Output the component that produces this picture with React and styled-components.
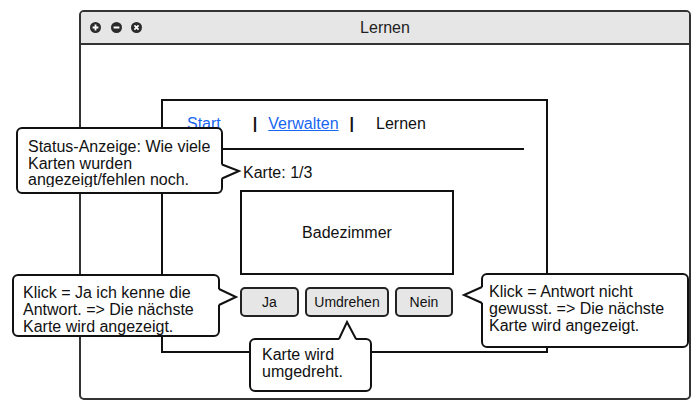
import styled, { createGlobalStyle } from "styled-components";

const GlobalStyle = createGlobalStyle`
  body {
    margin: 0;
    background: #ffffff;
    font-family: "Liberation Sans", Arial, sans-serif;
    color: #111;
  }
`;

const callouts = [
  {
    id: "status",
    box: { left: 16, top: 127, width: 207, height: 67 },
    pad: "10px 8px 0 10px",
    clip: 48,
    lh: 16.5,
    tail: { side: "right", at: 44.5, half: 7, tipAt: 44, depth: 16 },
    lines: ["Status-Anzeige: Wie viele", "Karten wurden", "angezeigt/fehlen noch."],
  },
  {
    id: "ja",
    box: { left: 12, top: 274, width: 208, height: 63 },
    pad: "8px 8px 0 9px",
    tail: { side: "right", at: 23, half: 8, tipAt: 23, depth: 16 },
    lines: ["Klick = Ja ich kenne die", "Antwort. => Die nächste", "Karte wird angezeigt."],
  },
  {
    id: "nein",
    box: { left: 481, top: 273, width: 208, height: 75 },
    pad: "8px 6px 0 6px",
    tail: { side: "left", at: 22, half: 8, tipAt: 22, depth: 17 },
    lines: ["Klick = Antwort nicht", "gewusst. => Die nächste", "Karte wird angezeigt."],
  },
  {
    id: "umdrehen",
    box: { left: 249, top: 338, width: 123, height: 54 },
    pad: "6px 6px 0 11px",
    tail: { side: "top", at: 98.5, half: 8.5, tipAt: 98, depth: 16 },
    lines: ["Karte wird", "umgedreht."],
  },
];

function tailPoints({ side, at, half, tipAt, depth }, w, h) {
  const horiz = side === "left" || side === "right";
  const out = side === "right" || side === "bottom" ? 1 : -1;
  const size = horiz ? w : h;
  const inner = out > 0 ? size - 4 : 0;
  const mid = inner + out;
  const tipN = inner + 2 * out + out * depth;
  const a1 = at - 2 - half;
  const a2 = at - 2 + half;
  const ta = tipAt - 2;
  const pt = (n, a) => (horiz ? `${n},${a}` : `${a},${n}`);
  return {
    fill: [pt(inner - out, a1 - 0.5), pt(tipN, ta), pt(inner - out, a2 + 0.5)].join(" "),
    line: [pt(mid, a1), pt(tipN, ta), pt(mid, a2)].join(" "),
  };
}

const WindowIcon = ({ kind }) => (
  <svg width="11" height="11" viewBox="0 0 11 11">
    <circle cx="5.5" cy="5.5" r="5.5" fill="#2b2b2b" />
    {kind === "plus" && <path d="M5.5 2.6v5.8M2.6 5.5h5.8" stroke="#fff" strokeWidth="1.8" />}
    {kind === "minus" && <path d="M2.6 5.5h5.8" stroke="#fff" strokeWidth="1.8" />}
    {kind === "close" && <path d="M3.4 3.4l4.2 4.2M7.6 3.4l-4.2 4.2" stroke="#fff" strokeWidth="1.7" />}
  </svg>
);

const App = () => {
  return (
    <Page>
      <GlobalStyle />
      <Window>
        <TitleBar>
          <Controls>
            <WindowIcon kind="plus" />
            <WindowIcon kind="minus" />
            <WindowIcon kind="close" />
          </Controls>
          <Title>Lernen</Title>
        </TitleBar>
        <Content>
          <Panel>
            <Nav>
              <NavLink href="#">Start</NavLink>
              <Sep $gap={32}>|</Sep>
              <NavLink href="#" $gap={11}>Verwalten</NavLink>
              <Sep $gap={11}>|</Sep>
              <NavText $gap={22}>Lernen</NavText>
            </Nav>
            <Divider />
            <Counter>Karte: 1/3</Counter>
            <Card>Badezimmer</Card>
            <ButtonRow>
              <Button $w={59}>Ja</Button>
              <Button $w={84}>Umdrehen</Button>
              <Button $w={58}>Nein</Button>
            </ButtonRow>
          </Panel>
        </Content>
      </Window>

      {callouts.map((c) => {
        const t = tailPoints(c.tail, c.box.width, c.box.height);
        return (
          <Callout key={c.id} $box={c.box} $pad={c.pad}>
            <CalloutText $clip={c.clip} $lh={c.lh}>
              {c.lines.map((l) => (
                <div key={l}>{l}</div>
              ))}
            </CalloutText>
            <Tail width="1" height="1">
              <polygon points={t.fill} fill="#fff" />
              <polyline points={t.line} fill="none" stroke="#111" strokeWidth="2" strokeLinejoin="miter" />
            </Tail>
          </Callout>
        );
      })}
    </Page>
  );
};

export default App;

const Page = styled.div`
  position: relative;
  width: 700px;
  height: 416px;
  padding: 10px 0 0 79px;
  box-sizing: border-box;
  overflow: hidden;
`;

const Window = styled.div`
  width: 612px;
  height: 390px;
  border: 2px solid #333;
  border-radius: 5px;
  box-sizing: border-box;
  overflow: hidden;
  display: flex;
  flex-direction: column;
  background: #fff;
`;

const TitleBar = styled.div`
  height: 31px;
  border-bottom: 2px solid #333;
  background: #e6e6e6;
  display: grid;
  grid-template-columns: 1fr auto 1fr;
  align-items: center;
`;

const Controls = styled.div`
  display: flex;
  align-items: center;
  gap: 9.5px;
  padding-left: 9px;
  margin-top: -1px;

  svg {
    display: block;
  }
`;

const Title = styled.div`
  font-size: 16px;
  color: #222;
`;

const Content = styled.div`
  flex: 1;
  padding: 54px 0 0 80px;
`;

const Panel = styled.div`
  width: 387px;
  height: 254px;
  border: 2px solid #111;
  box-sizing: border-box;
  padding: 14px 0 0 24px;
  display: flex;
  flex-direction: column;
  align-items: flex-start;
`;

const Nav = styled.div`
  display: flex;
  align-items: center;
  height: 18px;
  font-size: 16px;
`;

const NavLink = styled.a`
  color: #1866f2;
  text-decoration: underline;
  margin-left: ${(p) => p.$gap || 0}px;
`;

const NavText = styled.span`
  color: #111;
  margin-left: ${(p) => p.$gap || 0}px;
`;

const Sep = styled.span`
  font-weight: bold;
  color: #111;
  margin-left: ${(p) => p.$gap || 0}px;
`;

const Divider = styled.div`
  width: 339px;
  height: 2px;
  background: #111;
  margin: 15px 0 0 -2px;
`;

const Counter = styled.div`
  font-size: 16px;
  line-height: 18px;
  margin: 14px 0 0 56px;
`;

const Card = styled.div`
  width: 214px;
  height: 85px;
  border: 2px solid #111;
  box-sizing: border-box;
  margin: 8px 0 0 53px;
  display: flex;
  align-items: center;
  justify-content: center;
  font-size: 16px;
`;

const ButtonRow = styled.div`
  display: flex;
  gap: 6px;
  margin: 12px 0 0 53px;
`;

const Button = styled.button`
  width: ${(p) => p.$w}px;
  height: 30px;
  border: 2px solid #222;
  border-radius: 5px;
  background: #e6e6e6;
  font-family: "Liberation Sans", Arial, sans-serif;
  font-size: 14px;
  color: #111;
  padding: 0;
`;

const Callout = styled.div`
  position: absolute;
  left: ${(p) => p.$box.left}px;
  top: ${(p) => p.$box.top}px;
  width: ${(p) => p.$box.width}px;
  height: ${(p) => p.$box.height}px;
  box-sizing: border-box;
  border: 2px solid #111;
  border-radius: 6px;
  background: #fff;
  padding: ${(p) => p.$pad};
`;

const CalloutText = styled.div`
  font-size: 16px;
  line-height: ${(p) => p.$lh || 17}px;
  color: #111;
  white-space: nowrap;
  ${(p) => (p.$clip ? `height: ${p.$clip}px; overflow: hidden;` : "")}
`;

const Tail = styled.svg`
  position: absolute;
  left: 0;
  top: 0;
  overflow: visible;
  pointer-events: none;
`;
